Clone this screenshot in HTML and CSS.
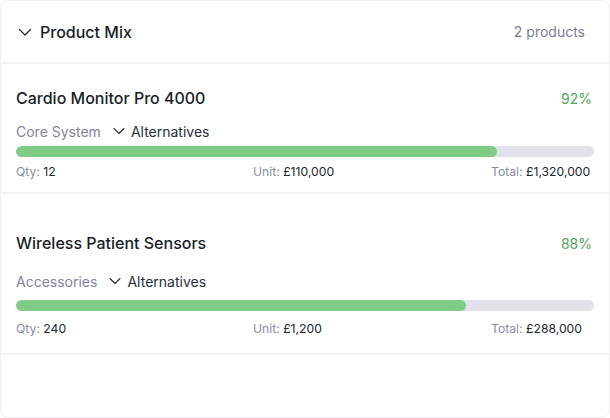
FILE: index.html
```html
<!DOCTYPE html>
<html>
<head>
<meta charset="utf-8">
<link rel="stylesheet" href="styles.css">
</head>
<body>
<div class="card">
  <div class="header">
    <div class="header-left">
      <svg class="chev" width="14" height="14" viewBox="0 0 14 14"><path d="M1.5 4.5 L7 10 L12.5 4.5" fill="none" stroke="#1f2430" stroke-width="1.2" stroke-linecap="round" stroke-linejoin="round"/></svg>
      <span class="title">Product Mix</span>
    </div>
    <span class="count">2 products</span>
  </div>

  <div class="row row-a">
    <div class="row-top">
      <span class="name">Cardio Monitor Pro 4000</span>
      <span class="pct">92%</span>
    </div>
    <div class="sub">
      <span class="cat">Core System</span>
      <span class="alt"><svg width="12" height="12" viewBox="0 0 12 12"><path d="M1 3.5 L6 8.5 L11 3.5" fill="none" stroke="#2a2e3a" stroke-width="1.1" stroke-linecap="round" stroke-linejoin="round"/></svg>Alternatives</span>
    </div>
    <div class="track"><div class="fill" style="width:83.2%"></div></div>
    <div class="meta">
      <span><span class="lbl">Qty:</span> 12</span>
      <span><span class="lbl">Unit:</span> £110,000</span>
      <span><span class="lbl">Total:</span> £1,320,000</span>
    </div>
  </div>

  <div class="row row-b">
    <div class="row-top">
      <span class="name">Wireless Patient Sensors</span>
      <span class="pct">88%</span>
    </div>
    <div class="sub">
      <span class="cat">Accessories</span>
      <span class="alt"><svg width="12" height="12" viewBox="0 0 12 12"><path d="M1 3.5 L6 8.5 L11 3.5" fill="none" stroke="#2a2e3a" stroke-width="1.1" stroke-linecap="round" stroke-linejoin="round"/></svg>Alternatives</span>
    </div>
    <div class="track"><div class="fill" style="width:77.9%"></div></div>
    <div class="meta">
      <span><span class="lbl">Qty:</span> 240</span>
      <span><span class="lbl">Unit:</span> £1,200</span>
      <span><span class="lbl">Total:</span> £288,000</span>
    </div>
  </div>
</div>
</body>
</html>
```

FILE: styles.css
```css
* { box-sizing: border-box; }
html, body { margin: 0; padding: 0; background: #ffffff; }
body {
  font-family: Inter, "Noto Sans", sans-serif;
  color: #161a22;
  width: 610px;
  height: 418px;
}
.card {
  width: 610px;
  height: 418px;
  border: 1px solid #f0f0f2;
  border-radius: 8px;
  background: #fff;
  overflow: hidden;
}
.header {
  height: 63px;
  display: flex;
  align-items: center;
  justify-content: space-between;
  padding: 0 24px 0 17px;
  border-bottom: 2px solid #f3f3f5;
}
.header-left { display: flex; align-items: center; gap: 8px; }
.chev { display: block; }
.title { font-size: 16px; font-weight: 500; color: #1a1e27; }
.count { font-size: 14px; color: #7b7e94; }

.row {
  padding: 0 15px 0 15px;
  border-bottom: 2px solid #f3f3f5;
  display: flex;
  flex-direction: column;
}
.row-a { padding-top: 22px; height: 130px; }
.row-b { padding-top: 37px; height: 161px; }
.row-top {
  display: flex;
  justify-content: space-between;
  align-items: center;
  height: 24px;
}
.name { font-size: 16px; font-weight: 500; color: #1a1e27; }
.pct { font-size: 14px; color: #56a360; padding-right: 2px; }
.sub {
  display: flex;
  align-items: center;
  gap: 12px;
  font-size: 14px;
  height: 20px;
}
.row-a .sub { margin-top: 11px; }
.row-b .sub { margin-top: 16px; }
.cat { color: #82859b; }
.alt { display: flex; align-items: center; gap: 6px; color: #2a2e3a; }
.alt svg { display: block; }
.track {
  height: 11px;
  border-radius: 6px;
  background: #e2e2ea;
  overflow: hidden;
}
.row-a .track { margin-top: 5px; }
.row-b .track { margin-top: 9px; }
.fill { height: 100%; background: #7fcc87; border-radius: 6px; }
.meta {
  display: grid;
  grid-template-columns: 237px 238px 1fr;
  font-size: 12.2px;
  color: #22262f;
  height: 18px;
  align-items: center;
}
.row-a .meta { margin-top: 5px; }
.row-b .meta { margin-top: 8px; }
.lbl { color: #8a8ca3; }
```
